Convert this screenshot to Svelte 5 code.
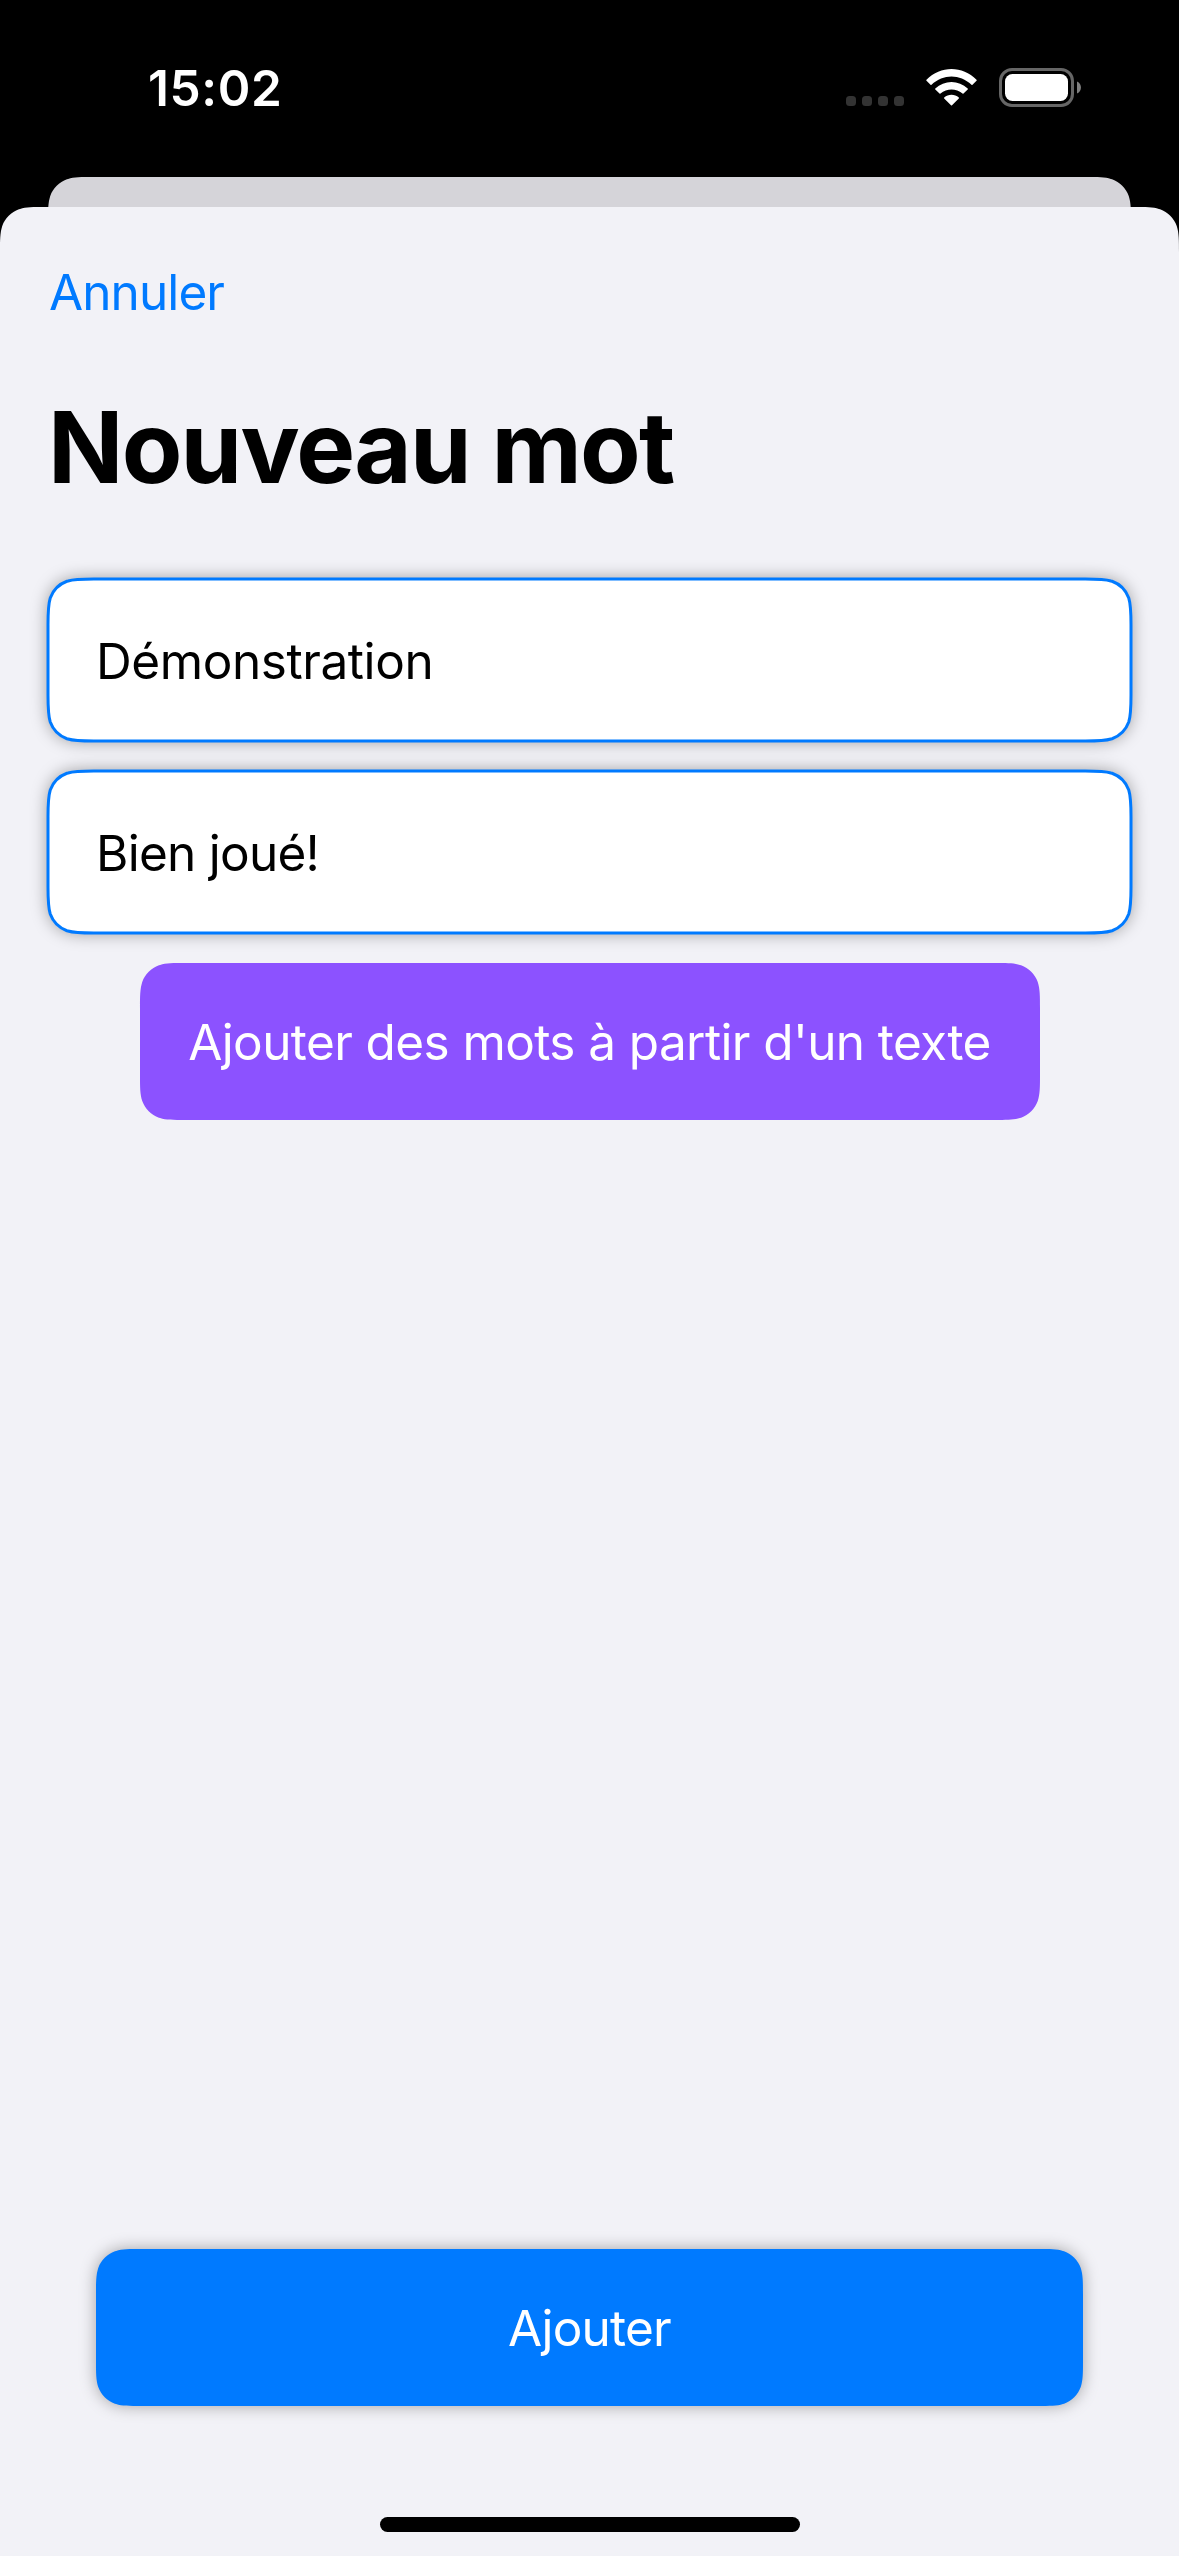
<script>
  let word = $state('Démonstration');
  let translation = $state('Bien joué!');

  // Rounded rectangle with iOS-style continuous corners.
  function squircle(w, h, r = 30, open = false) {
    const a = 1.528665 * r, b = 1.088493 * r, c = 0.868407 * r, d = 0.669934 * r, e = 0.065496 * r;
    const f = 0.631494 * r, g = 0.074911 * r, i = 0.372824 * r, j = 0.169059 * r;
    const top =
      `M${a} 0H${w - a}C${w - b} 0 ${w - c} 0 ${w - d} ${e}L${w - f} ${g}` +
      `C${w - i} ${j} ${w - j} ${i} ${w - g} ${f}C${w} ${c} ${w} ${b} ${w} ${a}`;
    const bottom = open
      ? `V${h}H0`
      : `V${h - a}C${w} ${h - b} ${w} ${h - c} ${w - g} ${h - f}` +
        `C${w - j} ${h - i} ${w - i} ${h - j} ${w - f} ${h - g}L${w - d} ${h - e}` +
        `C${w - c} ${h} ${w - b} ${h} ${w - a} ${h}H${a}` +
        `C${b} ${h} ${c} ${h} ${d} ${h - e}L${f} ${h - g}` +
        `C${i} ${h - j} ${j} ${h - i} ${g} ${h - f}C0 ${h - c} 0 ${h - b} 0 ${h - a}`;
    return top + bottom + `V${a}C0 ${b} 0 ${c} ${g} ${f}C${j} ${i} ${i} ${j} ${f} ${g}L${d} ${e}C${c} 0 ${b} 0 ${a} 0Z`;
  }
</script>

{#snippet shape(w, h, kind)}
  <svg class="shape {kind}" width={w} height={h} viewBox="0 0 {w} {h}" aria-hidden="true">
    <path d={squircle(w, h, 30, kind === 'sheet-bg' || kind === 'behind-bg')} />
  </svg>
{/snippet}

<div class="screen">
  <header class="status">
    <time>15:02</time>
    <svg class="indicators" width="240" height="42" viewBox="0 0 240 42" aria-hidden="true">
      <g fill="#333">
        <rect x="0" y="28" width="10" height="10" rx="3.5" />
        <rect x="16" y="28" width="10" height="10" rx="3.5" />
        <rect x="32" y="28" width="10" height="10" rx="3.5" />
        <rect x="48" y="28" width="10" height="10" rx="3.5" />
      </g>
      <g fill="#fff">
        <path d="M80.5 11.8C94.5-2.6 116.5-2.6 130.5 11.8Q131 12.3 130.5 12.8L126.5 16.7Q126 17.2 125.5 16.7C113.8 5.7 97.2 5.7 85.5 16.7Q85 17.2 84.5 16.7L80.5 12.8Q80 12.3 80.5 11.8Z" />
        <path d="M89.3 20.6C98.3 11.8 112.7 11.8 121.7 20.6Q122.2 21.1 121.7 21.6L117.5 25.6Q117 26.1 116.5 25.6C110.2 20 100.8 20 94.5 25.6Q94 26.1 93.5 25.6L89.3 21.6Q88.8 21.1 89.3 20.6Z" />
        <path d="M98.2 29.4C102.2 25.8 108.8 25.8 112.8 29.4Q113.3 29.9 112.8 30.4L106 37.2Q105.5 37.7 105 37.2L98.2 30.4Q97.7 29.9 98.2 29.4Z" />
      </g>
      <rect x="154.5" y="1.5" width="72" height="36" rx="11.5" fill="none" stroke="#666" stroke-width="3" />
      <rect x="159" y="6" width="63" height="27" rx="7.5" fill="#fff" />
      <path d="M231 13.5C236.3 15.5 236.3 23.5 231 25.5Z" fill="#808080" />
    </svg>
  </header>

  <div class="behind">{@render shape(1083, 60, 'behind-bg')}</div>

  <main class="sheet">
    {@render shape(1179, 2349, 'sheet-bg')}
    <button class="cancel">Annuler</button>
    <h1>Nouveau mot</h1>
    <form>
      <label class="field">
        {@render shape(1083, 162, 'field-bg')}
        <input class="word" bind:value={word} />
      </label>
      <label class="field">
        {@render shape(1083, 162, 'field-bg')}
        <input bind:value={translation} />
      </label>
      <button type="button" class="import">
        {@render shape(900, 157, 'import-bg')}
        <span>Ajouter des mots à partir d'un texte</span>
      </button>
    </form>
    <button class="add">
      {@render shape(987, 157, 'add-bg')}
      <span>Ajouter</span>
    </button>
    <div class="home"></div>
  </main>
</div>

<style>
  :global(body) {
    background: #000;
  }
  .screen {
    box-sizing: border-box;
    width: 1179px;
    height: 2556px;
    overflow: hidden;
    display: flex;
    flex-direction: column;
    background: #000;
    color: #000;
    font-family: Inter, 'Liberation Sans', sans-serif;
    font-size: 49.5px;
    line-height: 60px;
  }
  .status {
    box-sizing: border-box;
    height: 177px;
    flex: none;
    display: flex;
    justify-content: space-between;
    align-items: flex-start;
    padding: 58px 93px 0 148px;
    color: #fff;
  }
  time {
    font-weight: 600;
    letter-spacing: 0.6px;
  }
  .indicators {
    margin-top: 10px;
  }
  .shape {
    position: absolute;
    left: 0;
    top: 0;
    z-index: -1;
    overflow: visible;
  }
  .behind {
    position: relative;
    z-index: 0;
    height: 30px;
    flex: none;
    margin: 0 48px;
  }
  .behind-bg {
    fill: #d5d4d9;
  }
  .sheet {
    position: relative;
    z-index: 1;
    flex: 1;
    box-sizing: border-box;
    display: flex;
    flex-direction: column;
    align-items: flex-start;
    padding: 55px 48px 24px;
  }
  .sheet-bg {
    fill: #f2f2f7;
  }
  button {
    box-sizing: border-box;
    position: relative;
    z-index: 0;
    border: 0;
    padding: 0;
    background: none;
    color: #fff;
    font: inherit;
  }
  .cancel {
    height: 60px;
    margin-left: 1px;
    color: #007aff;
    letter-spacing: -0.9px;
  }
  h1 {
    margin: 65px 0 0;
    font-size: 99px;
    line-height: 120px;
    font-weight: 700;
    letter-spacing: -1.8px;
  }
  form {
    width: 100%;
    margin-top: 72px;
    display: flex;
    flex-direction: column;
    align-items: center;
    gap: 30px;
  }
  .field {
    position: relative;
    z-index: 0;
    width: 1083px;
    height: 162px;
    display: flex;
    align-items: center;
  }
  .field-bg {
    fill: #fff;
    stroke: #007aff;
    stroke-width: 3px;
    filter: drop-shadow(0 0 8px rgba(0, 0, 0, 0.33));
  }
  input {
    flex: 1;
    border: 0;
    outline: 0;
    padding: 2px 48px 0;
    background: none;
    color: #000;
    font: inherit;
    letter-spacing: -0.74px;
  }
  .word {
    letter-spacing: -0.42px;
  }
  .import {
    width: 900px;
    height: 157px;
    padding-top: 1px;
    letter-spacing: -0.6px;
  }
  .import-bg {
    fill: #8c52ff;
  }
  .add {
    width: 987px;
    height: 157px;
    margin: auto auto 111px;
    padding-top: 1px;
    letter-spacing: -0.78px;
  }
  .add-bg {
    fill: #007aff;
    filter: drop-shadow(0 0 8px rgba(0, 0, 0, 0.33));
  }
  .home {
    width: 420px;
    height: 15px;
    margin: 0 auto;
    border-radius: 8px;
    background: #000;
  }
</style>
